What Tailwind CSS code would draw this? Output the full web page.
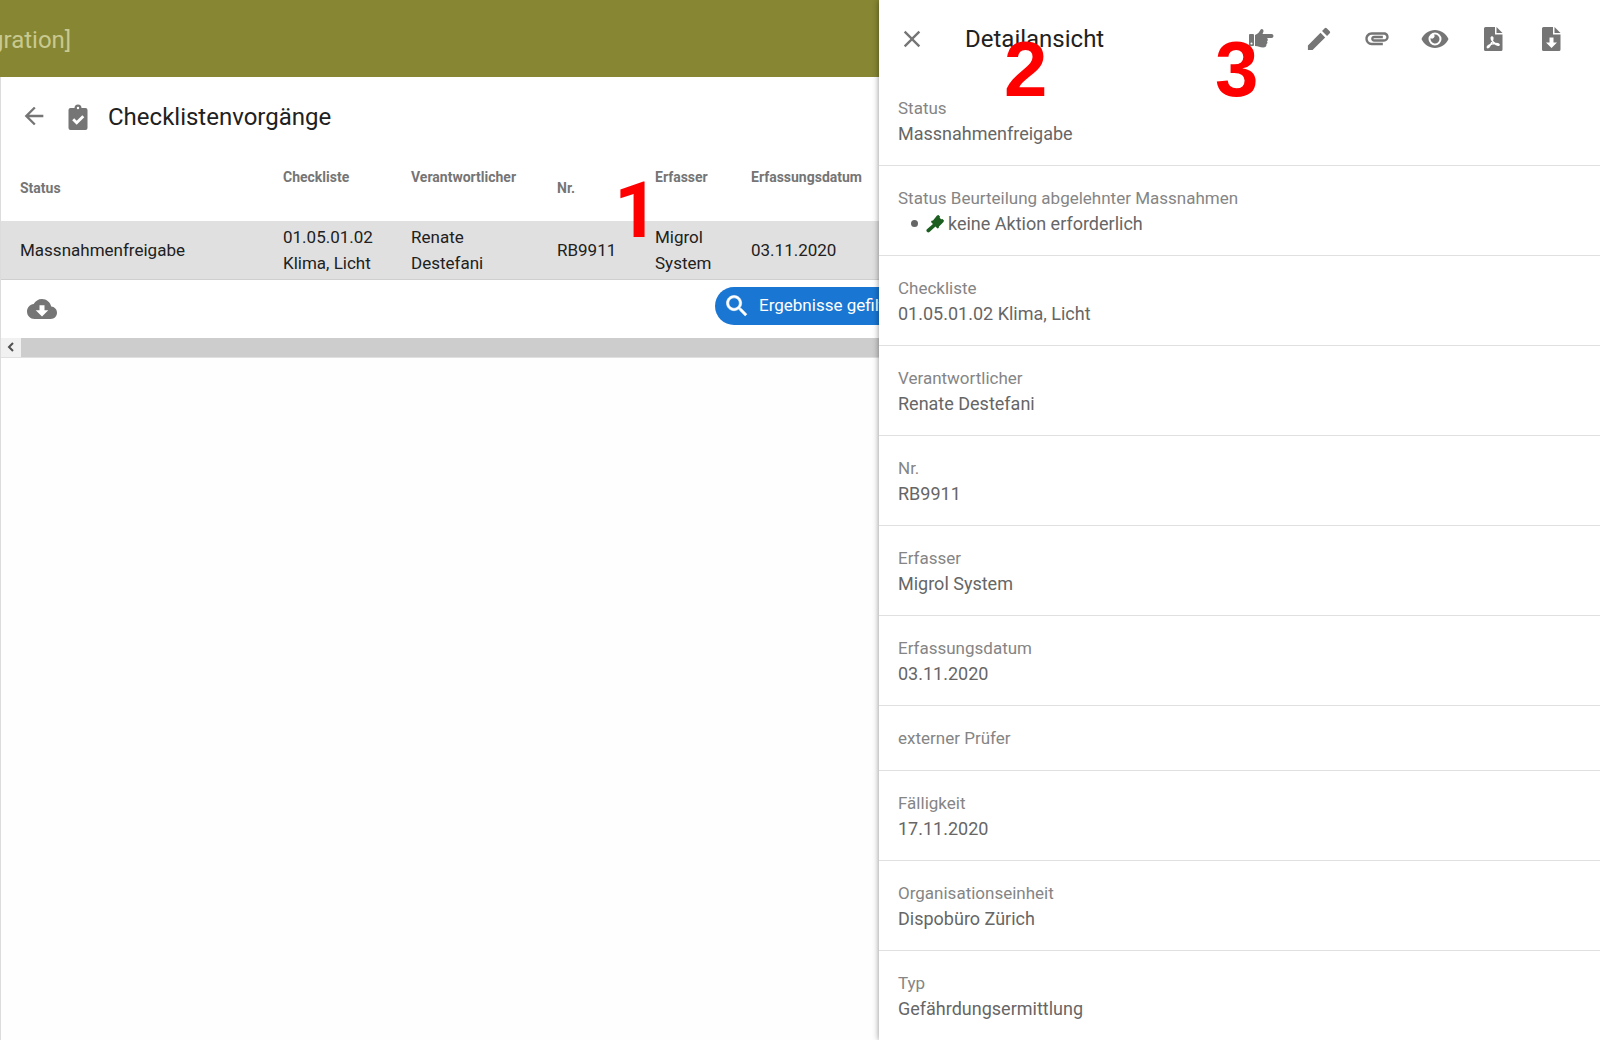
<!DOCTYPE html>
<html lang="de">
<head>
  <meta charset="UTF-8">
  <meta name="viewport" content="width=device-width, initial-scale=1.0">
  <title>Checklistenvorgänge</title>
  <script src="https://cdn.jsdelivr.net/npm/@tailwindcss/browser@4"></script>
</head>
<body class="h-screen overflow-hidden bg-[#fefefe] font-[Roboto,sans-serif] text-[#212121]">
  <div class="relative flex h-full">

    <!-- List page -->
    <div class="flex min-w-0 flex-1 flex-col overflow-hidden">
      <header class="flex h-[77px] shrink-0 items-center overflow-hidden bg-[#868633] pt-0.5">
        <span class="-ml-[10px] text-2xl whitespace-nowrap text-[#c9c990]">gration]</span>
      </header>

      <main class="flex-1 border-l border-[#dcdcdc]">
        <section class="border-b border-[#e0e0e0] bg-white">
          <div class="flex h-[78px] items-center pl-[19px]">
            <button type="button" aria-label="Zurück" class="text-[#757575]">
              <svg class="size-7" viewBox="0 0 24 24" fill="currentColor"><path d="M20 11H7.83l5.59-5.59L12 4l-8 8 8 8 1.41-1.41L7.83 13H20v-2z"/></svg>
            </button>
            <svg class="mt-1 ml-4 size-7 text-[#757575]" viewBox="0 0 28 28" fill="currentColor"><path fill-rule="evenodd" d="M6.500 4H10.500a3.500 3.500 0 0 1 7 0H21.500A2 2 0 0 1 23.500 6V24a2 2 0 0 1-2 2H6.500a2 2 0 0 1-2-2V6A2 2 0 0 1 6.500 4zM14 2.800a1.200 1.200 0 1 0 0 2.400 1.200 1.200 0 0 0 0-2.400zM10.200 14.300l-2 2 4.500 4.500 7.600-7.600-2-2-5.600 5.600z"/></svg>
            <h1 class="mt-0.5 ml-4 text-2xl">Checklistenvorgänge</h1>
          </div>

          <table class="w-[960px] table-fixed text-left text-[17px] leading-[26px]">
            <colgroup>
              <col class="w-[263px]">
              <col class="w-[128px]">
              <col class="w-[146px]">
              <col class="w-[98px]">
              <col class="w-[96px]">
              <col>
            </colgroup>
            <thead class="text-sm text-[#757575]">
              <tr class="h-[66px]">
                <th class="pl-[19px] font-bold">Status</th>
                <th class="pt-3 pl-[19px] align-top font-bold">Checkliste</th>
                <th class="pt-3 pl-[19px] align-top font-bold">Verantwortlicher</th>
                <th class="pl-[19px] font-bold">Nr.</th>
                <th class="pt-3 pl-[19px] align-top font-bold">Erfasser</th>
                <th class="pt-3 pl-[19px] align-top font-bold">Erfassungsdatum</th>
              </tr>
            </thead>
            <tbody>
              <tr class="h-[58px] border-b border-[#cfcfcf] bg-[#e0e0e0]">
                <td class="pl-[19px]">Massnahmenfreigabe</td>
                <td class="pl-[19px]">01.05.01.02 Klima, Licht</td>
                <td class="pl-[19px]">Renate Destefani</td>
                <td class="pl-[19px]">RB9911</td>
                <td class="pl-[19px]">Migrol System</td>
                <td class="pl-[19px]">03.11.2020</td>
              </tr>
            </tbody>
          </table>

          <div class="flex h-[58px] items-center justify-between pl-[26px]">
            <button type="button" aria-label="Herunterladen" class="text-[#757575]">
              <svg class="size-[30px]" viewBox="0 0 24 24" fill="currentColor"><path d="M19.35 10.04C18.67 6.59 15.64 4 12 4 9.11 4 6.6 5.64 5.35 8.04 2.34 8.36 0 10.91 0 14c0 3.31 2.69 6 6 6h13c2.76 0 5-2.24 5-5 0-2.64-2.05-4.78-4.65-4.96zM17 13l-5 5-5-5h3V9h4v4h3z"/></svg>
            </button>
            <button type="button" class="mb-1.5 flex h-[38px] w-[164px] shrink-0 items-center gap-2 rounded-l-full bg-[#1976d2] pl-2 text-[17px] whitespace-nowrap text-white">
              <svg class="size-7 shrink-0" viewBox="0 0 24 24" fill="currentColor" stroke="currentColor" stroke-width=".5"><path d="M15.5 14h-.79l-.28-.27C15.41 12.59 16 11.11 16 9.5 16 5.91 13.09 3 9.5 3S3 5.91 3 9.5 5.91 16 9.5 16c1.61 0 3.09-.59 4.23-1.57l.27.28v.79l5 4.99L20.49 19l-4.99-5zm-6 0C7.01 14 5 11.99 5 9.5S7.01 5 9.5 5 14 7.01 14 9.5 11.99 14 9.5 14z"/></svg>
              Ergebnisse gefiltert
            </button>
          </div>

          <div class="flex h-[19px] bg-[#cdcdcd]">
            <button type="button" aria-label="Nach links" class="flex w-5 items-center justify-center bg-[#f1f1f1] text-[#505050]">
              <svg class="size-2.5" viewBox="0 0 10 10" fill="none" stroke="currentColor" stroke-width="2"><path d="M7 1L3 5l4 4"/></svg>
            </button>
          </div>
        </section>
      </main>
    </div>

    <!-- Detail drawer -->
    <aside class="z-10 flex w-[721px] shrink-0 flex-col bg-white shadow-[0_0_6px_rgba(0,0,0,0.45)]">
      <div class="flex h-[76px] shrink-0 items-center pt-0.5 pr-[35px] pl-[19px] text-[#757575]">
        <button type="button" aria-label="Schliessen">
          <svg class="size-7" viewBox="0 0 24 24" fill="currentColor"><path d="M19 6.41L17.59 5 12 10.59 6.41 5 5 6.41 10.59 12 5 17.59 6.41 19 12 13.41 17.59 19 19 17.59 13.41 12z"/></svg>
        </button>
        <h2 class="ml-[39px] text-2xl text-[#212121]">Detailansicht</h2>
        <div class="ml-auto flex items-center gap-[30px]">
          <button type="button" aria-label="Zuweisen">
            <svg class="size-7" viewBox="0 0 28 28" fill="currentColor"><path fill-rule="evenodd" d="M3 9h3a1 1 0 0 1 1 1v10a1 1 0 0 1-1 1H3a1 1 0 0 1-1-1V10a1 1 0 0 1 1-1zm1.500 8.500a1 1 0 1 0 0 2 1 1 0 0 0 0-2z"/><path d="M8 10c3-1 4-3 5.500-5.300 1.500-1.700 3.700.300 2.800 2.300L15.500 9H24.500a2 2 0 0 1 0 4H20c1.200 1 1 2.500 0 3.200.8 1.100.5 2.400-.6 3 .3 2-.9 3.300-3.200 3.300-3.500 0-4.700-1.500-8.200-1.500z"/></svg>
          </button>
          <button type="button" aria-label="Bearbeiten">
            <svg class="size-7" viewBox="0 0 24 24" fill="currentColor"><path d="M2.500 17.500V21.500h4L17.300 10.700l-4-4zM21.200 7.100a1.200 1.200 0 0 0 0-1.700l-2.600-2.600a1.200 1.200 0 0 0-1.700 0l-2.300 2.300 4.300 4.300z"/></svg>
          </button>
          <button type="button" aria-label="Anhang">
            <svg class="size-7" viewBox="0 0 24 24" fill="currentColor"><path d="M2 12.500C2 9.460 4.460 7 7.500 7H18c2.210 0 4 1.790 4 4s-1.790 4-4 4H9.500C8.120 15 7 13.880 7 12.500S8.120 10 9.500 10H17v2H9.410c-.55 0-.55 1 0 1H18c1.100 0 2-.9 2-2s-.9-2-2-2H7.500C5.570 9 4 10.570 4 12.500S5.570 16 7.500 16H17v2H7.500C4.460 18 2 15.540 2 12.500z" transform="translate(0 -.7)"/></svg>
          </button>
          <button type="button" aria-label="Ansehen">
            <svg class="size-7" viewBox="0 0 28 28" fill="currentColor"><path fill-rule="evenodd" d="M14 5C8 5 3 8.500.5 14 3 19.500 8 23 14 23s11-3.500 13.500-9C25 8.500 20 5 14 5zm0 2.500a6.500 6.500 0 1 1 0 13 6.500 6.500 0 0 1 0-13z"/><path d="M14 9.500a4.500 4.500 0 1 1-4.400 3.600 2.500 2.500 0 0 0 3.500-3.500 4.500 4.500 0 0 1 .9-.1z"/></svg>
          </button>
          <button type="button" aria-label="PDF">
            <svg class="size-7" viewBox="0 0 28 28" fill="currentColor"><path d="M6.500 2H16v7.500h7.500V24.500a1.500 1.500 0 0 1-1.500 1.500H6.500A1.500 1.500 0 0 1 5 24.500V3.500A1.500 1.500 0 0 1 6.500 2z"/><path d="M17.500 2l6 6h-6z"/><path fill="none" stroke="#fff" stroke-width="1.500" d="M13 12c1.500 0 .8 3.500-.8 6.500-1.500 3-3.200 4.700-3.800 4-.8-1.500 4-4 8-4 4.500 0 4.300 2 2.600 1.800-2.500-.3-6-4-6.600-6.300-.3-1.200-.1-2 .6-2z"/></svg>
          </button>
          <button type="button" aria-label="Exportieren">
            <svg class="size-7" viewBox="0 0 28 28" fill="currentColor"><path fill-rule="evenodd" d="M6.500 2H16v7.500h7.500V24.500a1.500 1.500 0 0 1-1.500 1.500H6.500A1.500 1.500 0 0 1 5 24.500V3.500A1.500 1.500 0 0 1 6.500 2zM12.500 12.500v5H9l5.500 5.500 5.500-5.500h-3.500v-5z"/><path d="M17.500 2l6 6h-6z"/></svg>
          </button>
        </div>
      </div>

      <dl class="text-lg leading-[25px] text-[#666]">
        <div class="border-b border-[#e0e0e0] px-[19px] pt-5 pb-[19px]">
          <dt class="text-[17px] leading-[25px] text-[#858585]">Status</dt>
          <dd>Massnahmenfreigabe</dd>
        </div>
        <div class="border-b border-[#e0e0e0] px-[19px] pt-5 pb-[19px]">
          <dt class="text-[17px] leading-[25px] text-[#858585]">Status Beurteilung abgelehnter Massnahmen</dt>
          <dd class="flex items-center pl-[13px]">
            <span class="size-[7px] rounded-full bg-[#666]"></span>
            <svg class="mr-1 ml-2 size-[18px] text-[#1b5e20]" viewBox="0 0 18 18" fill="currentColor"><path d="M11 .5l1.500-.5 1.500 1.500-.3 1.300 1.500 1.500 1.300-.3L18 5.500l-.5 1.500-4.500 4.500-.3 1.500-1.200.5L5 7l.5-1.200L7 5.500z"/><path d="M7.500 8.500l2.500 2.500-6.500 6c-1.500 1.300-4-.7-2.800-2.500z"/></svg>
            keine Aktion erforderlich
          </dd>
        </div>
        <div class="border-b border-[#e0e0e0] px-[19px] pt-5 pb-[19px]">
          <dt class="text-[17px] leading-[25px] text-[#858585]">Checkliste</dt>
          <dd>01.05.01.02 Klima, Licht</dd>
        </div>
        <div class="border-b border-[#e0e0e0] px-[19px] pt-5 pb-[19px]">
          <dt class="text-[17px] leading-[25px] text-[#858585]">Verantwortlicher</dt>
          <dd>Renate Destefani</dd>
        </div>
        <div class="border-b border-[#e0e0e0] px-[19px] pt-5 pb-[19px]">
          <dt class="text-[17px] leading-[25px] text-[#858585]">Nr.</dt>
          <dd>RB9911</dd>
        </div>
        <div class="border-b border-[#e0e0e0] px-[19px] pt-5 pb-[19px]">
          <dt class="text-[17px] leading-[25px] text-[#858585]">Erfasser</dt>
          <dd>Migrol System</dd>
        </div>
        <div class="border-b border-[#e0e0e0] px-[19px] pt-5 pb-[19px]">
          <dt class="text-[17px] leading-[25px] text-[#858585]">Erfassungsdatum</dt>
          <dd>03.11.2020</dd>
        </div>
        <div class="border-b border-[#e0e0e0] px-[19px] pt-5 pb-[19px]">
          <dt class="text-[17px] leading-[25px] text-[#858585]">externer Prüfer</dt>
        </div>
        <div class="border-b border-[#e0e0e0] px-[19px] pt-5 pb-[19px]">
          <dt class="text-[17px] leading-[25px] text-[#858585]">Fälligkeit</dt>
          <dd>17.11.2020</dd>
        </div>
        <div class="border-b border-[#e0e0e0] px-[19px] pt-5 pb-[19px]">
          <dt class="text-[17px] leading-[25px] text-[#858585]">Organisationseinheit</dt>
          <dd>Dispobüro Zürich</dd>
        </div>
        <div class="px-[19px] pt-5 pb-[19px]">
          <dt class="text-[17px] leading-[25px] text-[#858585]">Typ</dt>
          <dd>Gefährdungsermittlung</dd>
        </div>
      </dl>
    </aside>

    <!-- Step markers -->
    <div class="pointer-events-none absolute inset-0 z-20 font-['Liberation_Sans',sans-serif] text-[78px] leading-[78px] font-bold text-[#ff0000]">
      <span class="absolute top-[172px] left-[614px] font-[Roboto,sans-serif]">1</span>
      <span class="absolute top-[30px] left-[1004px]">2</span>
      <span class="absolute top-[30px] left-[1215px]">3</span>
    </div>
  </div>
</body>
</html>
